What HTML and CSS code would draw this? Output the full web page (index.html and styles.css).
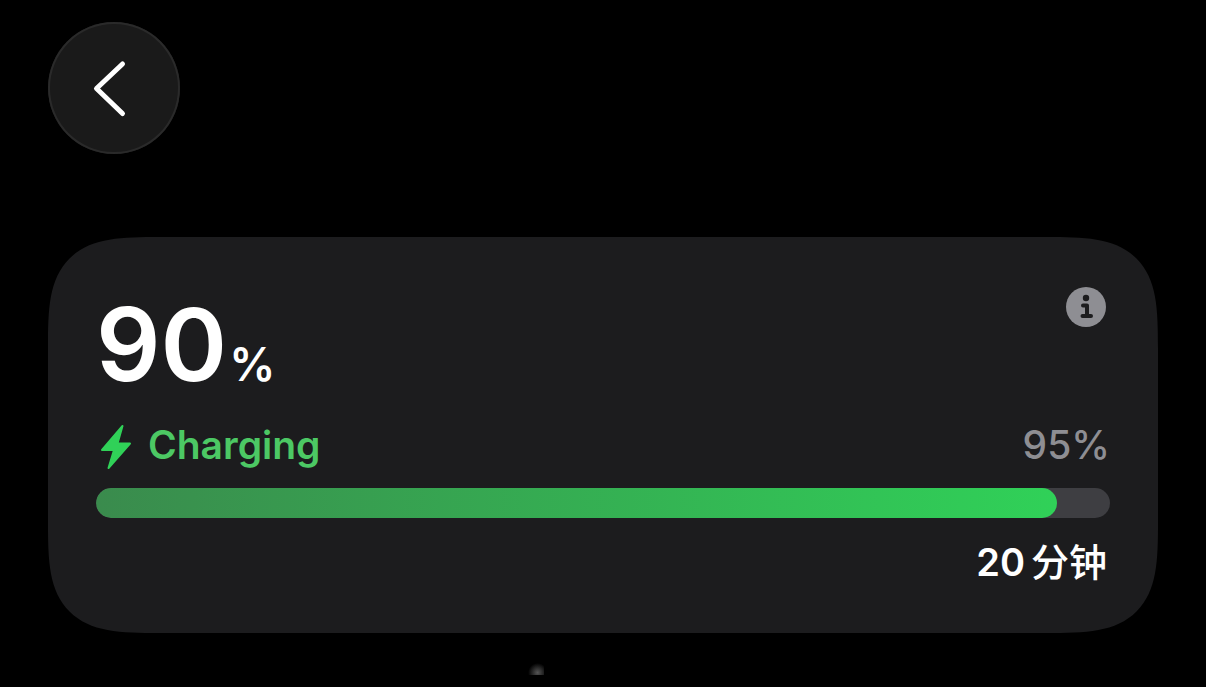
FILE: index.html
```
<!DOCTYPE html>
<html lang="zh-CN">
<head>
<meta charset="utf-8">
<meta name="viewport" content="width=device-width, initial-scale=1">
<title>Battery</title>
<link rel="stylesheet" href="styles.css">
</head>
<body>
<header class="topbar">
  <button class="back" type="button" aria-label="Back">
    <svg class="back-icon" viewBox="0 0 132 132" aria-hidden="true"><path d="M74.500 42 48.500 66.500 74.500 91.500"/></svg>
  </button>
</header>
<main class="card">
  <div class="summary">
    <h1 class="level">90<span class="unit">%</span></h1>
    <button class="info" type="button" aria-label="Info">
      <svg class="info-icon" viewBox="0 0 40 40" aria-hidden="true">
        <circle class="info-disc" cx="20" cy="20" r="20"/>
        <circle class="info-dot" cx="20" cy="11" r="3.200"/>
        <path class="info-stem" d="M17 18.500H21V29M16.500 29H25"/>
      </svg>
    </button>
  </div>
  <div class="status">
    <span class="charging">
      <svg class="bolt" viewBox="0 0 32 46" aria-hidden="true"><path d="M22.500 2 2 26H14L8.500 44 30 19.500H17.500Z"/></svg>
      <span>Charging</span>
    </span>
    <span class="limit">95%</span>
  </div>
  <div class="track" role="progressbar" aria-label="Charging" aria-valuenow="95" aria-valuemin="0" aria-valuemax="100">
    <div class="fill" style="width: 94.8%"></div>
  </div>
  <p class="remaining"><span>20</span><span class="minutes">分钟</span></p>
</main>
<div class="below"><span class="glint"></span></div>
</body>
</html>
```
FILE: styles.css
```
* { box-sizing: border-box; }

body {
  margin: 0;
  padding: 22px 48px 0;
  background: #000;
  color: #fff;
  font-family: Inter, "Noto Sans CJK SC", sans-serif;
}

button {
  border: 0;
  padding: 0;
  background: none;
  cursor: pointer;
}

svg { display: block; }

.topbar {
  display: flex;
  margin-bottom: 83px;
}

.back {
  width: 132px;
  height: 132px;
  border-radius: 50%;
  background: #1a1a1a;
  box-shadow: inset 0 0 0 2px #2a2a2a;
}

.back-icon {
  width: 100%;
  fill: none;
  stroke: #fff;
  stroke-width: 5;
  stroke-linecap: round;
  stroke-linejoin: round;
}

.card {
  padding: 50px 48px 47px;
  border-radius: 72px;
  background: #1c1c1e;
}

@supports (corner-shape: superellipse(1.7)) {
  .card {
    border-radius: 112px;
    corner-shape: superellipse(1.7);
  }
}

.summary {
  display: flex;
  justify-content: space-between;
  align-items: flex-start;
  padding-right: 4px;
}

.level {
  margin: 0;
  padding-top: 7px;
  font-size: 101px;
  line-height: 100px;
  font-weight: 600;
}

.unit {
  margin-left: 2px;
  font-size: 46px;
}

.info-icon {
  width: 40px;
  height: 40px;
}

.info-disc { fill: #8e8e93; }

.info-dot { fill: #1c1c1e; }

.info-stem {
  fill: none;
  stroke: #1c1c1e;
  stroke-width: 4;
  stroke-linecap: round;
  stroke-linejoin: round;
}

.status {
  display: flex;
  justify-content: space-between;
  align-items: flex-start;
  margin-top: 10px;
  padding-left: 4px;
  font-size: 39px;
  line-height: 42px;
  font-weight: 600;
}

.charging {
  display: flex;
  align-items: flex-start;
  gap: 16px;
  color: #4cc864;
}

.bolt {
  width: 32px;
  height: 46px;
  fill: #30d158;
  stroke: #30d158;
  stroke-width: 2;
  stroke-linejoin: round;
}

.limit {
  color: #8e8e93;
  font-weight: 500;
}

.track {
  height: 30px;
  margin-top: 18px;
  border-radius: 15px;
  background: #3e3e42;
  overflow: hidden;
}

.fill {
  height: 100%;
  border-radius: 15px;
  background: linear-gradient(90deg, #3a8b4d, #30d158);
}

.remaining {
  display: flex;
  justify-content: flex-end;
  gap: 6px;
  margin: 20px 0 0;
  padding-right: 3px;
  font-size: 38px;
  line-height: 48px;
  font-weight: 600;
}

.minutes { font-weight: 500; }

.below {
  display: flex;
  padding: 30px 0 0 480px;
}

.glint {
  width: 16px;
  height: 12px;
  background: radial-gradient(ellipse at 60% 80%, #555, #000 70%);
}
```
